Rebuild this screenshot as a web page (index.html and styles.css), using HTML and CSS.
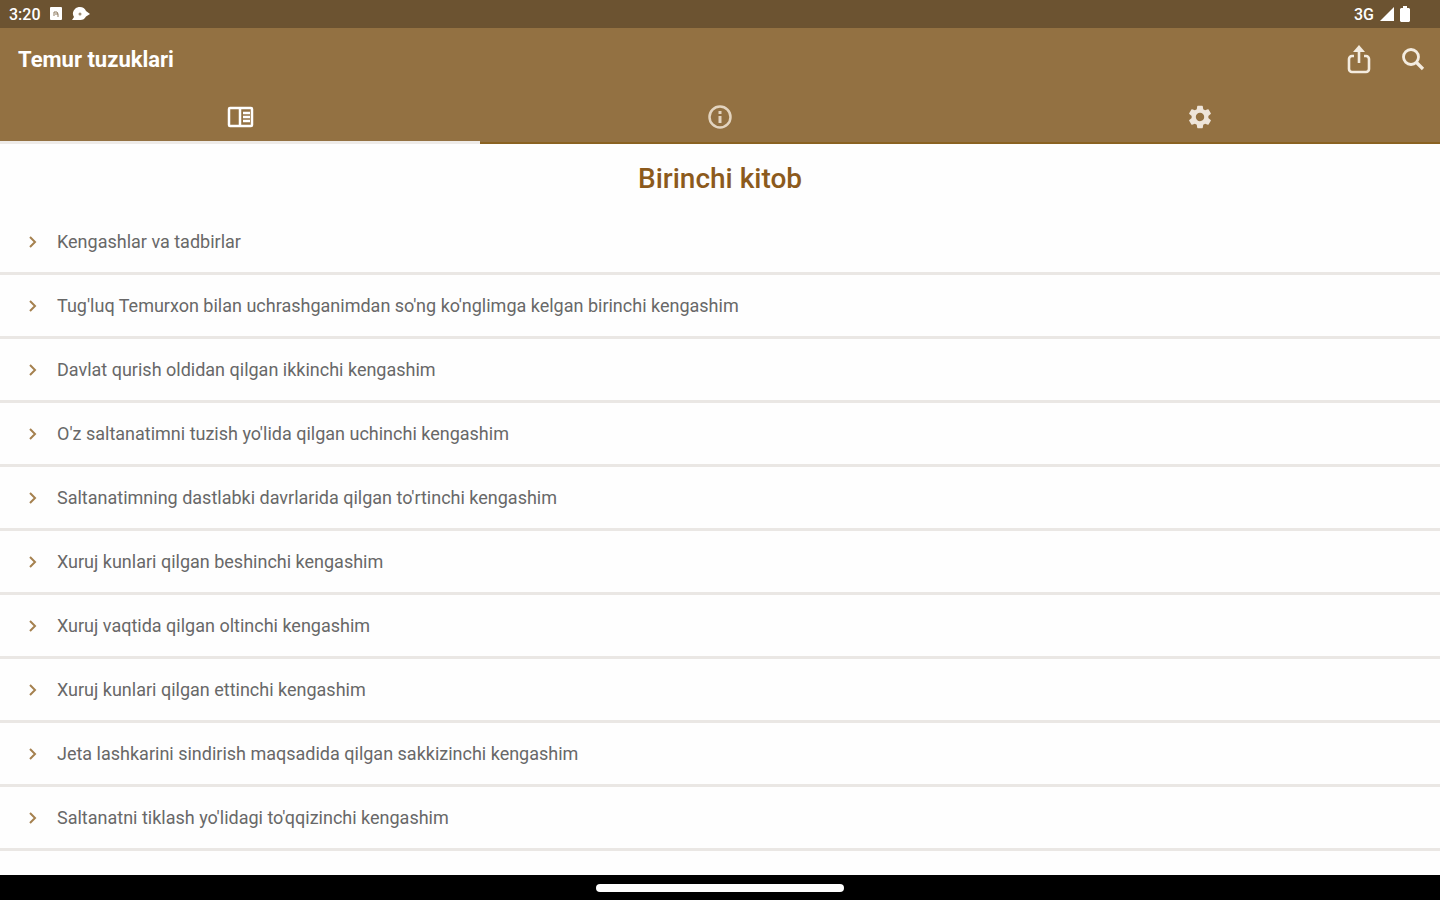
FILE: index.html
```
<!DOCTYPE html>
<html lang="uz">
<head>
  <meta charset="UTF-8" />
  <meta name="viewport" content="width=device-width, initial-scale=1.0" />
  <title>Temur tuzuklari</title>
  <link rel="stylesheet" href="styles.css">
</head>
<body>
  <!-- Status bar -->
  <div class="status-bar">
    <div class="status-left">
      <span class="clock">3:20</span>
      <svg width="14" height="14" viewBox="0 0 14 14">
        <rect x="1" y="0" width="12" height="13" rx="1" fill="#fff"/>
        <path d="M5 9V5h3l1 2v3M6 7h3" fill="none" stroke="#8d7a60" stroke-width="1"/>
      </svg>
      <svg width="20" height="14" viewBox="0 0 20 14">
        <path d="M9 0a6.500 6.500 0 0 1 6 4l4 3-4 2.500A6.500 6.500 0 0 1 9 13H1l2-3A6.500 6.500 0 0 1 9 0z" fill="#fff"/>
        <circle cx="9" cy="7" r="1.500" fill="#a09078"/>
      </svg>
    </div>
    <div class="status-right">
      <span class="network">3G</span>
      <svg width="14" height="14" viewBox="0 0 14 14"><path d="M14 0v14H0z" fill="#fff"/></svg>
      <svg width="10" height="16" viewBox="0 0 10 16"><path d="M3 0h4v2h2l1 1v12l-1 1H1l-1-1V3l1-1h2z" fill="#fff"/></svg>
    </div>
  </div>

  <header class="header">
    <div class="app-bar">
      <h1 class="app-title">Temur tuzuklari</h1>
      <div class="actions">
        <button type="button" aria-label="Ulashish">
          <svg width="30" height="30" viewBox="0 0 30 30">
            <path d="M10 11H8a3 3 0 0 0-3 3v10a3 3 0 0 0 3 3h14a3 3 0 0 0 3-3V14a3 3 0 0 0-3-3h-2M15 5v13" fill="none" stroke="#f4ece0" stroke-width="2.600"/>
            <path d="M15 0l6 7H9z" fill="#f4ece0"/>
          </svg>
        </button>
        <button type="button" aria-label="Qidirish">
          <svg width="30" height="30" viewBox="0 0 30 30">
            <circle cx="13" cy="12" r="7.500" fill="none" stroke="#f4ece0" stroke-width="2.800"/>
            <path d="M18 17l7 7" stroke="#f4ece0" stroke-width="3.200"/>
          </svg>
        </button>
      </div>
    </div>
    <nav class="tabs">
      <button type="button" class="tab active" aria-label="Kitob">
        <svg width="28" height="28" viewBox="0 0 28 28">
          <rect x="3" y="5" width="23" height="18" rx="1" fill="none" stroke="#fff" stroke-width="2.500"/>
          <path d="M14 5v18" stroke="#fff" stroke-width="2.500"/>
          <path d="M17 10h7M17 14h7M17 18h7" stroke="#fff" stroke-width="2.500"/>
        </svg>
      </button>
      <button type="button" class="tab" aria-label="Ma'lumot">
        <svg width="28" height="28" viewBox="0 0 28 28">
          <circle cx="14" cy="14" r="10.500" fill="none" stroke="#e3d4bf" stroke-width="2.500"/>
          <path d="M14 8v3M14 13v7" stroke="#e3d4bf" stroke-width="3"/>
        </svg>
      </button>
      <button type="button" class="tab" aria-label="Sozlamalar">
        <svg width="28" height="28" viewBox="0 0 24 24" fill="#eee5da">
          <path d="M19.140 12.940c.04-.3.060-.61.060-.94 0-.32-.02-.64-.07-.94l2.030-1.580a.49.49 0 0 0 .12-.61l-1.920-3.320a.488.488 0 0 0-.59-.22l-2.390.96c-.5-.38-1.030-.7-1.620-.94l-.36-2.540a.484.484 0 0 0-.48-.41h-3.840c-.24 0-.43.17-.47.41l-.36 2.540c-.59.24-1.130.57-1.620.94l-2.390-.96c-.22-.08-.47 0-.59.22L2.740 8.870c-.12.21-.08.47.12.61l2.030 1.580c-.05.3-.09.63-.09.94s.02.64.07.94l-2.030 1.580a.49.49 0 0 0-.12.61l1.920 3.320c.12.22.37.29.59.22l2.390-.96c.5.38 1.030.7 1.620.94l.36 2.540c.05.24.24.41.48.41h3.840c.24 0 .44-.17.47-.41l.36-2.540c.59-.24 1.130-.56 1.620-.94l2.390.96c.22.08.47 0 .59-.22l1.920-3.320c.12-.22.07-.47-.12-.61l-2.010-1.580zM12 15.600A3.610 3.610 0 0 1 8.400 12c0-1.980 1.620-3.600 3.600-3.600s3.600 1.620 3.600 3.600-1.620 3.600-3.600 3.600z"/>
        </svg>
      </button>
    </nav>
  </header>

  <main class="content">
    <h2 class="book-title">Birinchi kitob</h2>
    <ul class="chapters">
      <li><a href="#"><svg class="chevron" viewBox="0 0 10 14"><path d="M2 2l5 5-5 5"/></svg>Kengashlar va tadbirlar</a></li>
      <li><a href="#"><svg class="chevron" viewBox="0 0 10 14"><path d="M2 2l5 5-5 5"/></svg>Tug'luq Temurxon bilan uchrashganimdan so'ng ko'nglimga kelgan birinchi kengashim</a></li>
      <li><a href="#"><svg class="chevron" viewBox="0 0 10 14"><path d="M2 2l5 5-5 5"/></svg>Davlat qurish oldidan qilgan ikkinchi kengashim</a></li>
      <li><a href="#"><svg class="chevron" viewBox="0 0 10 14"><path d="M2 2l5 5-5 5"/></svg>O'z saltanatimni tuzish yo'lida qilgan uchinchi kengashim</a></li>
      <li><a href="#"><svg class="chevron" viewBox="0 0 10 14"><path d="M2 2l5 5-5 5"/></svg>Saltanatimning dastlabki davrlarida qilgan to'rtinchi kengashim</a></li>
      <li><a href="#"><svg class="chevron" viewBox="0 0 10 14"><path d="M2 2l5 5-5 5"/></svg>Xuruj kunlari qilgan beshinchi kengashim</a></li>
      <li><a href="#"><svg class="chevron" viewBox="0 0 10 14"><path d="M2 2l5 5-5 5"/></svg>Xuruj vaqtida qilgan oltinchi kengashim</a></li>
      <li><a href="#"><svg class="chevron" viewBox="0 0 10 14"><path d="M2 2l5 5-5 5"/></svg>Xuruj kunlari qilgan ettinchi kengashim</a></li>
      <li><a href="#"><svg class="chevron" viewBox="0 0 10 14"><path d="M2 2l5 5-5 5"/></svg>Jeta lashkarini sindirish maqsadida qilgan sakkizinchi kengashim</a></li>
      <li><a href="#"><svg class="chevron" viewBox="0 0 10 14"><path d="M2 2l5 5-5 5"/></svg>Saltanatni tiklash yo'lidagi to'qqizinchi kengashim</a></li>
    </ul>
  </main>

  <!-- Gesture bar -->
  <div class="gesture-bar"><span class="handle"></span></div>
</body>
</html>
```
FILE: styles.css
```
* {
  box-sizing: border-box;
}

body {
  margin: 0;
  height: 100vh;
  display: flex;
  flex-direction: column;
  background: #fefefe;
  font-family: Roboto, sans-serif;
}

svg {
  display: block;
  flex-shrink: 0;
}

button {
  padding: 0;
  border: none;
  background: none;
  cursor: pointer;
}

.status-bar {
  display: flex;
  flex-shrink: 0;
  justify-content: space-between;
  align-items: center;
  height: 28px;
  padding: 0 30px 0 9px;
  background: #6c5331;
  color: #fff;
  font-size: 16px;
  font-weight: 500;
}

.status-left {
  display: flex;
  align-items: center;
  gap: 8px;
}

.status-right {
  display: flex;
  align-items: center;
  gap: 6px;
}

.header {
  flex-shrink: 0;
  background: #937142;
  border-bottom: 2px solid #8a6222;
}

.app-bar {
  display: flex;
  justify-content: space-between;
  align-items: center;
  height: 63px;
  padding: 0 12px 0 18px;
}

.app-title {
  margin: 0;
  color: #fff;
  font-size: 22px;
  font-weight: 700;
}

.actions {
  display: flex;
  gap: 24px;
}

.tabs {
  display: grid;
  grid-template-columns: repeat(3, 1fr);
  height: 53px;
  margin-bottom: -2px;
}

.tab {
  display: flex;
  justify-content: center;
  align-items: center;
  padding-top: 2px;
  border-bottom: 3px solid transparent;
}

.tab.active {
  border-bottom-color: #eeebe8;
}

.content {
  flex: 1;
  min-height: 0;
  overflow: hidden;
}

.book-title {
  margin: 0;
  padding: 17px 0 14px;
  color: #8c5a1c;
  font-size: 28px;
  font-weight: 500;
  line-height: 36px;
  text-align: center;
}

.chapters {
  margin: 0;
  padding: 0;
  list-style: none;
}

.chapters li {
  border-bottom: 3px solid #eae7e4;
}

.chapters a {
  display: flex;
  align-items: center;
  gap: 19px;
  height: 61px;
  padding: 0 28px;
  color: #686868;
  font-size: 18px;
  text-decoration: none;
}

.chevron {
  width: 10px;
  height: 14px;
  fill: none;
  stroke: #a5814f;
  stroke-width: 2;
}

.gesture-bar {
  display: flex;
  flex-shrink: 0;
  justify-content: center;
  align-items: center;
  height: 25px;
  background: #000;
}

.handle {
  width: 248px;
  height: 8px;
  border-radius: 4px;
  background: #fff;
}
```
